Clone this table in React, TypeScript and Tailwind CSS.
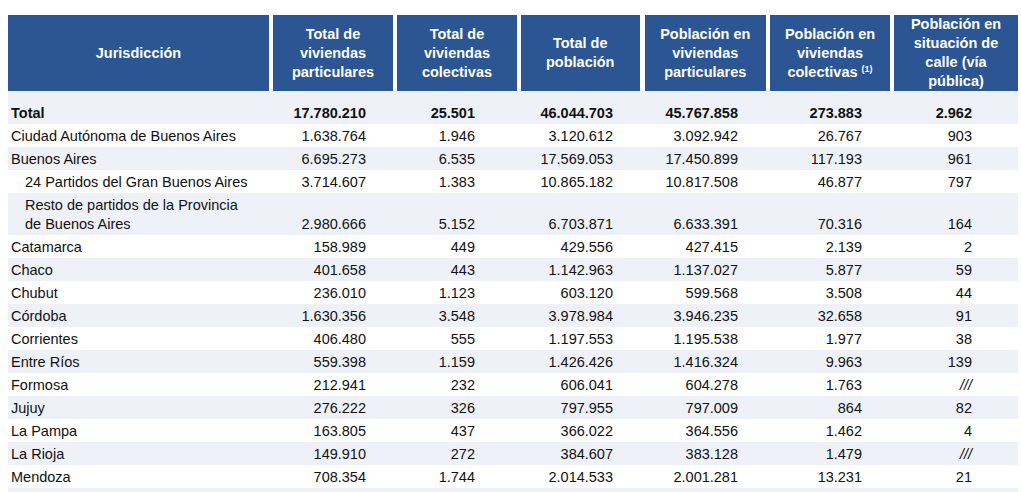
import React from "react";

type Row = {
  name: string;
  indent?: boolean;
  twoLine?: boolean;
  bold?: boolean;
  values: string[];
};

const rows: Row[] = [
  { name: "Total", bold: true, values: ["17.780.210", "25.501", "46.044.703", "45.767.858", "273.883", "2.962"] },
  { name: "Ciudad Autónoma de Buenos Aires", values: ["1.638.764", "1.946", "3.120.612", "3.092.942", "26.767", "903"] },
  { name: "Buenos Aires", values: ["6.695.273", "6.535", "17.569.053", "17.450.899", "117.193", "961"] },
  { name: "24 Partidos del Gran Buenos Aires", indent: true, values: ["3.714.607", "1.383", "10.865.182", "10.817.508", "46.877", "797"] },
  { name: "Resto de partidos de la Provincia de Buenos Aires", indent: true, twoLine: true, values: ["2.980.666", "5.152", "6.703.871", "6.633.391", "70.316", "164"] },
  { name: "Catamarca", values: ["158.989", "449", "429.556", "427.415", "2.139", "2"] },
  { name: "Chaco", values: ["401.658", "443", "1.142.963", "1.137.027", "5.877", "59"] },
  { name: "Chubut", values: ["236.010", "1.123", "603.120", "599.568", "3.508", "44"] },
  { name: "Córdoba", values: ["1.630.356", "3.548", "3.978.984", "3.946.235", "32.658", "91"] },
  { name: "Corrientes", values: ["406.480", "555", "1.197.553", "1.195.538", "1.977", "38"] },
  { name: "Entre Ríos", values: ["559.398", "1.159", "1.426.426", "1.416.324", "9.963", "139"] },
  { name: "Formosa", values: ["212.941", "232", "606.041", "604.278", "1.763", "///"] },
  { name: "Jujuy", values: ["276.222", "326", "797.955", "797.009", "864", "82"] },
  { name: "La Pampa", values: ["163.805", "437", "366.022", "364.556", "1.462", "4"] },
  { name: "La Rioja", values: ["149.910", "272", "384.607", "383.128", "1.479", "///"] },
  { name: "Mendoza", values: ["708.354", "1.744", "2.014.533", "2.001.281", "13.231", "21"] },
];

// right padding per numeric column, so figures line up like the source
const padRight = ["pr-[29px]", "pr-[44px]", "pr-[29px]", "pr-[30px]", "pr-[30px]", "pr-[46px]"];

const thBase = "bg-[#2c5593] text-white font-bold text-center align-middle px-2 h-[76px] leading-[19px] border-l-4 border-white";

export default function App() {
  return (
    <div className="h-[492px] w-[1021px] overflow-hidden bg-white pt-[15px] pl-2 text-[14.5px] text-[#111]" style={{ fontFamily: '"Liberation Sans", Arial, sans-serif' }}>
      <table className="table-fixed border-collapse w-[1010px]">
        <colgroup>
          <col className="w-[263px]" />
          <col className="w-[124px]" />
          <col className="w-[124px]" />
          <col className="w-[123px]" />
          <col className="w-[126px]" />
          <col className="w-[124px]" />
          <col className="w-[126px]" />
        </colgroup>
        <thead>
          <tr>
            <th className="bg-[#2c5593] text-white font-bold text-center align-middle h-[76px] leading-[19px]">Jurisdicción</th>
            <th className={thBase}>Total de viviendas particulares</th>
            <th className={thBase}>Total de viviendas colectivas</th>
            <th className={thBase}>Total de población</th>
            <th className={`${thBase} border-l-[5px]`}>Población en viviendas particulares</th>
            <th className={thBase}>
              Población en viviendas colectivas{" "}
              <span className="relative -top-[5px] text-[9px] leading-none font-bold">(1)</span>
            </th>
            <th className={thBase}>Población en situación de calle (vía pública)</th>
          </tr>
        </thead>
        <tbody>
          {rows.map((r, i) => {
            const striped = i % 2 === 0;
            const cellPad = r.bold ? "pt-[13px] pb-[1px]" : "pt-[3px] pb-[1px]";
            return (
              <tr key={r.name} className={striped ? "bg-[#eef2f8]" : "bg-white"}>
                <td className={`${cellPad} leading-[19px] align-bottom ${r.indent ? "pl-[17px]" : "pl-[3px]"} ${r.bold ? "font-bold" : ""}`}>
                  {r.twoLine ? (
                    <>
                      Resto de partidos de la Provincia
                      <br />
                      de Buenos Aires
                    </>
                  ) : (
                    r.name
                  )}
                </td>
                {r.values.map((v, j) => (
                  <td key={j} className={`${cellPad} leading-[19px] align-bottom text-right ${padRight[j]} ${r.bold ? "font-bold" : ""} ${v === "///" ? "italic" : ""}`}>
                    {v}
                  </td>
                ))}
              </tr>
            );
          })}
          <tr className="bg-[#eef2f8]">
            <td colSpan={7} className="h-[23px]"></td>
          </tr>
        </tbody>
      </table>
    </div>
  );
}
